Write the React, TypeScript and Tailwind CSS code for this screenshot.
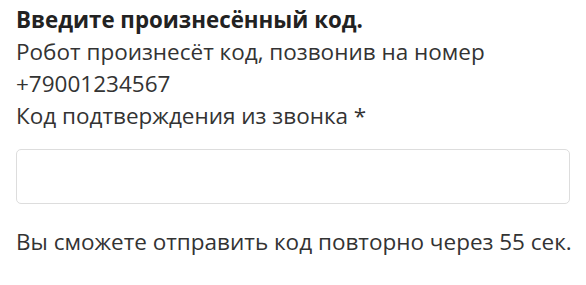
import React from "react";

export default function App() {
  return (
    <div className="w-[586px] h-[285px] bg-white px-4 pt-[3px] text-[#333] font-['Open_Sans',sans-serif]">
      <div className="text-[22.3px] font-bold leading-[33px] text-[#222] whitespace-nowrap">Введите произнесённый код.</div>
      <div className="text-[22.5px] leading-[32px]">Робот произнесёт код, позвонив на номер +79001234567</div>
      <label className="block text-[22.5px] leading-[32px]">Код подтверждения из звонка *</label>
      <input className="mt-[17px] block w-full h-[55px] border border-[#ddd] rounded-[5px] outline-none px-3" />
      <div className="mt-[22px] text-[22.5px] leading-[32px] whitespace-nowrap">Вы сможете отправить код повторно через 55 сек.</div>
    </div>
  );
}
